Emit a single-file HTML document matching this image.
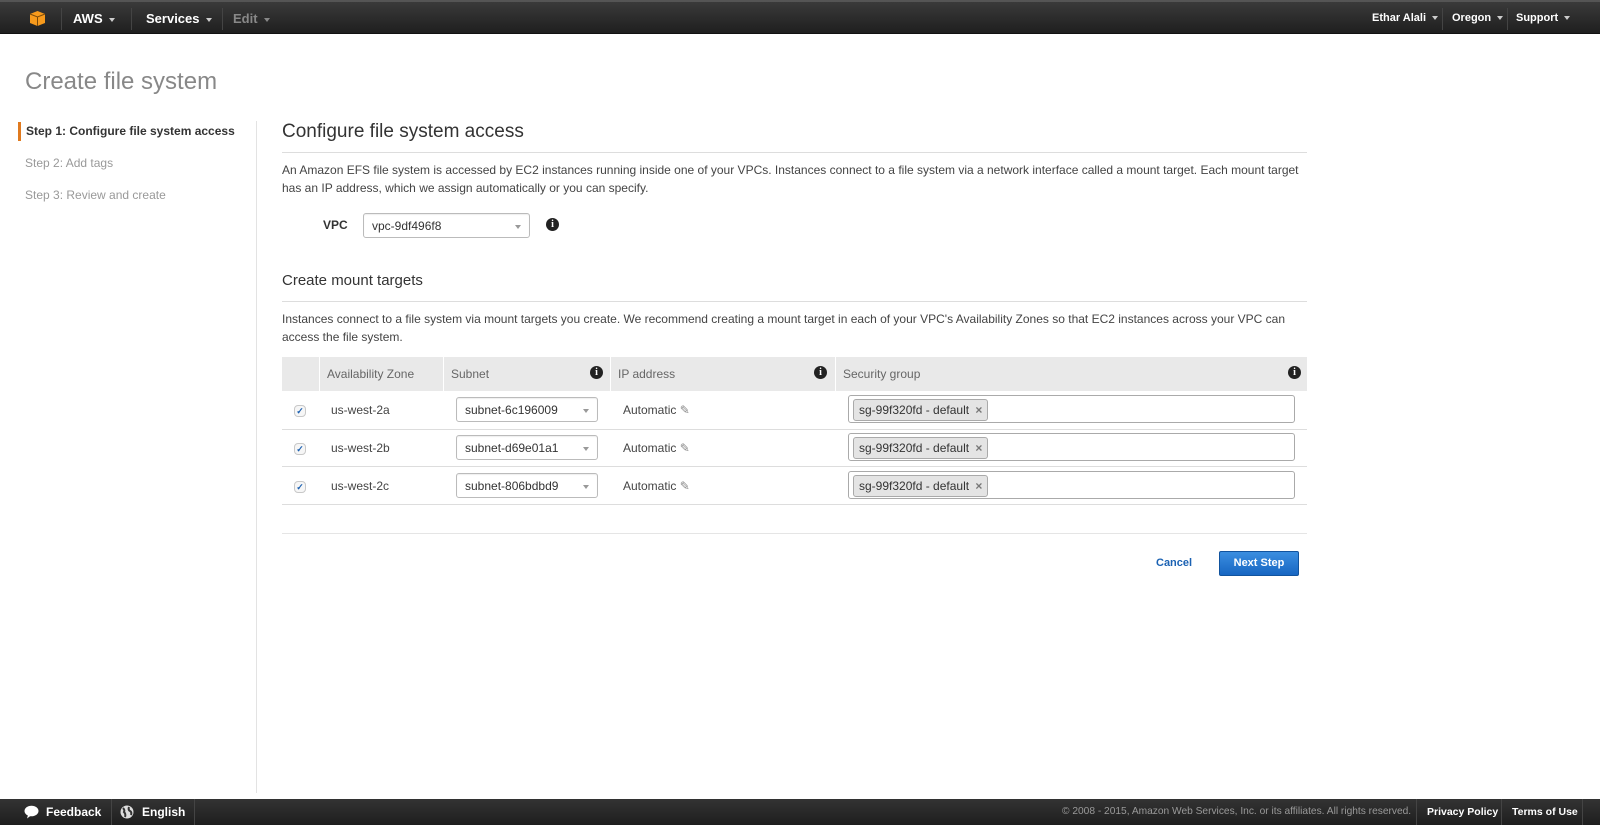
<!DOCTYPE html>
<html><head><meta charset="utf-8"><style>
*{box-sizing:border-box;margin:0;padding:0}
body{width:1600px;height:825px;position:relative;background:#fff;font-family:"Liberation Sans",Arial,sans-serif;color:#444;overflow:hidden}
.abs{position:absolute}
.hdr{left:0;top:0;width:1600px;height:34px;background:linear-gradient(#3a3a3a,#1f1f1f);border-top:2px solid #555;border-bottom:1px solid #111}
.hdr .t{position:absolute;top:9px;color:#fff;font-weight:bold;font-size:13px}
.hdr .r{font-size:11px;top:10px}
.sep{position:absolute;width:1px;background:#111;border-right:1px solid #444}
.caret{display:inline-block;margin-left:6px;border-left:3.5px solid transparent;border-right:3.5px solid transparent;border-top:4px solid #ccc;vertical-align:middle}
.ftr{left:0;top:799px;width:1600px;height:26px;background:linear-gradient(#333,#1e1e1e)}
.ftr .t{position:absolute;top:6px;color:#fff;font-weight:bold;font-size:12px}
.txt{font-size:12px;color:#444;line-height:18px}
.hr{position:absolute;height:1px;background:#ddd}
.sel{position:absolute;border:1px solid #bbb;border-radius:3px;background:#fff;font-size:12px;color:#333;padding-left:8px;box-shadow:inset 0 1px 1px #eee}
.sel:after{content:"";position:absolute;right:8px;top:50%;margin-top:-1px;border-left:3px solid transparent;border-right:3px solid transparent;border-top:4px solid #999}
.info{position:absolute;width:13px;height:13px;border-radius:50%;background:#222;color:#fff;font:bold 10px/13px "Liberation Serif",serif;text-align:center}
.th{position:absolute;top:357px;height:34px;background:#e9e9e9;font-size:12px;color:#666;line-height:34px;padding-left:7px;border-left:1px solid #fff}
.cb{position:absolute;width:12px;height:12px;border:1px solid #c8c8c8;border-radius:4px;background:#f6f6f6;font-size:9px;line-height:11px;color:#1a5fb0;text-align:center;font-weight:bold}
.sg{position:absolute;border:1px solid #aaa;border-radius:3px;background:#fff;height:28px}
.tag{position:absolute;left:4px;top:3px;height:22px;border:1px solid #aaa;border-radius:3px;background:#e4e4e4;font-size:12px;color:#333;line-height:20px;padding:0 5px}
</style></head><body>
<div class="abs hdr">
 <svg class="abs" style="left:29px;top:8px" width="17" height="17" viewBox="0 0 17 17"><path d="M1 4 L8.5 1 L16 4 L16 13 L8.5 16 L1 13Z" fill="#f79a1c"/><path d="M1 4 L8.5 7 L16 4 M8.5 7 L8.5 16" stroke="#7a4a0a" stroke-width="1" fill="none"/></svg>
 <div class="sep" style="left:61px;top:6px;height:22px"></div>
 <div class="t" style="left:73px">AWS<span class="caret"></span></div>
 <div class="sep" style="left:131px;top:6px;height:22px"></div>
 <div class="t" style="left:146px">Services<span class="caret"></span></div>
 <div class="sep" style="left:222px;top:6px;height:22px"></div>
 <div class="t" style="left:233px;color:#888">Edit<span class="caret" style="border-top-color:#888"></span></div>
 <div class="t r" style="left:1372px">Ethar Alali<span class="caret"></span></div>
 <div class="sep" style="left:1442px;top:6px;height:22px"></div>
 <div class="t r" style="left:1452px">Oregon<span class="caret"></span></div>
 <div class="sep" style="left:1507px;top:6px;height:22px"></div>
 <div class="t r" style="left:1516px">Support<span class="caret"></span></div>
</div>

<div class="abs" style="left:25px;top:68px;font-size:24px;color:#888">Create file system</div>

<div class="abs" style="left:18px;top:122px;width:3px;height:19px;background:#e07a1f"></div>
<div class="abs" style="left:26px;top:124px;font-size:12px;font-weight:bold;color:#333">Step 1: Configure file system access</div>
<div class="abs" style="left:25px;top:156px;font-size:12px;color:#999">Step 2: Add tags</div>
<div class="abs" style="left:25px;top:188px;font-size:12px;color:#999">Step 3: Review and create</div>
<div class="abs" style="left:256px;top:121px;width:1px;height:672px;background:#e3e3e3"></div>

<div class="abs" style="left:282px;top:121px;font-size:19px;color:#333">Configure file system access</div>
<div class="hr" style="left:282px;top:152px;width:1025px"></div>
<div class="abs txt" style="left:282px;top:161px;width:1025px">An Amazon EFS file system is accessed by EC2 instances running inside one of your VPCs. Instances connect to a file system via a network interface called a mount target. Each mount target has an IP address, which we assign automatically or you can specify.</div>
<div class="abs" style="left:323px;top:218px;font-size:12px;font-weight:bold;color:#333">VPC</div>
<div class="sel" style="left:363px;top:213px;width:167px;height:25px;line-height:25px">vpc-9df496f8</div>
<div class="info" style="left:546px;top:218px">i</div>

<div class="abs" style="left:282px;top:272px;font-size:15px;color:#333">Create mount targets</div>
<div class="hr" style="left:282px;top:301px;width:1025px"></div>
<div class="abs txt" style="left:282px;top:310px;width:1025px">Instances connect to a file system via mount targets you create. We recommend creating a mount target in each of your VPC's Availability Zones so that EC2 instances across your VPC can access the file system.</div>

<div class="th" style="left:282px;width:37px;border-left:none"></div>
<div class="th" style="left:319px;width:124px">Availability Zone</div>
<div class="th" style="left:443px;width:167px">Subnet</div>
<div class="th" style="left:610px;width:225px">IP address</div>
<div class="th" style="left:835px;width:472px">Security group</div>
<div class="info" style="left:590px;top:366px">i</div>
<div class="info" style="left:814px;top:366px">i</div>
<div class="info" style="left:1288px;top:366px">i</div>

<div class="hr" style="left:282px;top:429px;width:1025px"></div>
<div class="hr" style="left:282px;top:466px;width:1025px"></div>
<div class="hr" style="left:282px;top:504px;width:1025px"></div>

<div class="cb" style="left:294px;top:405px">✓</div>
<div class="abs txt" style="left:331px;top:401px">us-west-2a</div>
<div class="sel" style="left:456px;top:397px;width:142px;height:25px;line-height:25px">subnet-6c196009</div>
<div class="abs txt" style="left:623px;top:401px">Automatic <span style="color:#888">✎</span></div>
<div class="sg" style="left:848px;top:395px;width:447px"><div class="tag">sg-99f320fd - default <span style="color:#777;font-weight:bold;margin-left:3px">×</span></div></div>

<div class="cb" style="left:294px;top:443px">✓</div>
<div class="abs txt" style="left:331px;top:439px">us-west-2b</div>
<div class="sel" style="left:456px;top:435px;width:142px;height:25px;line-height:25px">subnet-d69e01a1</div>
<div class="abs txt" style="left:623px;top:439px">Automatic <span style="color:#888">✎</span></div>
<div class="sg" style="left:848px;top:433px;width:447px"><div class="tag">sg-99f320fd - default <span style="color:#777;font-weight:bold;margin-left:3px">×</span></div></div>

<div class="cb" style="left:294px;top:481px">✓</div>
<div class="abs txt" style="left:331px;top:477px">us-west-2c</div>
<div class="sel" style="left:456px;top:473px;width:142px;height:25px;line-height:25px">subnet-806bdbd9</div>
<div class="abs txt" style="left:623px;top:477px">Automatic <span style="color:#888">✎</span></div>
<div class="sg" style="left:848px;top:471px;width:447px"><div class="tag">sg-99f320fd - default <span style="color:#777;font-weight:bold;margin-left:3px">×</span></div></div>

<div class="hr" style="left:282px;top:533px;width:1025px;background:#e5e5e5"></div>
<div class="abs" style="left:1156px;top:557px;font-size:11px;font-weight:bold;color:#1b62b3">Cancel</div>
<div class="abs" style="left:1219px;top:551px;width:80px;height:25px;border-radius:2px;background:linear-gradient(#3b8ee0,#1766c2);border:1px solid #11539e;color:#fff;font-size:11px;font-weight:bold;text-align:center;line-height:23px">Next Step</div>

<div class="abs ftr">
 <svg class="abs" style="left:24px;top:6px" width="15" height="14" viewBox="0 0 15 14"><ellipse cx="7.5" cy="6" rx="7" ry="5.3" fill="#fff"/><path d="M4 10 L3 13.5 L7 10.5Z" fill="#fff"/></svg>
 <div class="t" style="left:46px">Feedback</div>
 <div class="sep" style="left:111px;top:0;height:26px"></div>
 <svg class="abs" style="left:120px;top:6px" width="14" height="14" viewBox="0 0 14 14"><circle cx="7" cy="7" r="6.5" fill="#ddd"/><path d="M3 3 Q5 5 4 7 Q6 9 5 12 M9 2 Q8 5 10 6 Q12 7 11 10" stroke="#333" stroke-width="2" fill="none"/></svg>
 <div class="t" style="left:142px">English</div>
 <div class="sep" style="left:194px;top:0;height:26px"></div>
 <div class="t" style="left:1062px;font-weight:normal;color:#999;font-size:10.2px;top:7px">© 2008 - 2015, Amazon Web Services, Inc. or its affiliates. All rights reserved.</div>
 <div class="sep" style="left:1416px;top:0;height:26px"></div>
 <div class="t" style="left:1427px;font-size:10.5px;top:7px">Privacy Policy</div>
 <div class="sep" style="left:1501px;top:0;height:26px"></div>
 <div class="t" style="left:1512px;font-size:10.5px;top:7px">Terms of Use</div>
 <div class="sep" style="left:1582px;top:0;height:26px"></div>
</div>
</body></html>
